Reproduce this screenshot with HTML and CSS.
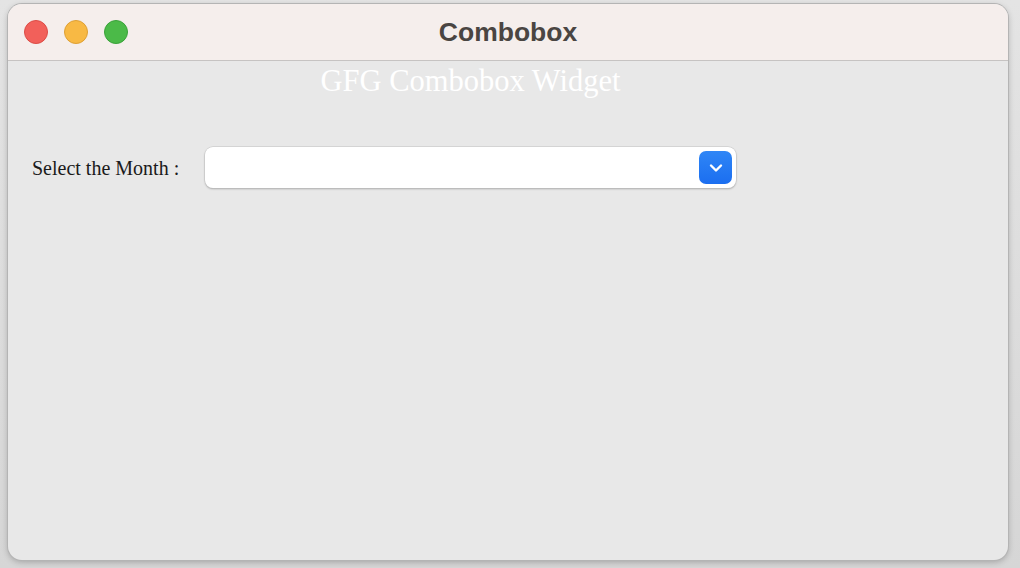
FILE: index.html
```html
<!DOCTYPE html>
<html>
<head>
<meta charset="utf-8">
<link rel="stylesheet" href="styles.css">
</head>
<body>
<div class="window">
  <div class="titlebar">
    <div class="lights">
      <span class="light red"></span>
      <span class="light yellow"></span>
      <span class="light green"></span>
    </div>
    <div class="title">Combobox</div>
  </div>
  <div class="content">
    <div class="heading">GFG Combobox Widget</div>
    <div class="row">
      <div class="label">Select the Month :</div>
      <div class="combo">
        <div class="arrow">
          <svg width="14" height="10" viewBox="0 0 14 10"><path d="M2 2.5 L7 7.5 L12 2.5" fill="none" stroke="#fff" stroke-width="2.4" stroke-linecap="round" stroke-linejoin="round"/></svg>
        </div>
      </div>
    </div>
  </div>
</div>
</body>
</html>
```
FILE: styles.css
```css
html, body {
  margin: 0;
  padding: 0;
}
body {
  width: 1020px;
  height: 568px;
  background: linear-gradient(180deg, #e4e4e4 0%, #d6d6d6 100%);
  overflow: hidden;
  padding-top: 4px;
  padding-left: 8px;
  box-sizing: border-box;
}
.window {
  width: 1000px;
  height: 556px;
  border-radius: 14px;
  background: #e8e8e8;
  box-shadow: 0 0 0 1px #b4b4b4, 0 2px 6px rgba(0,0,0,0.25);
  overflow: hidden;
  display: flex;
  flex-direction: column;
}
.titlebar {
  height: 56px;
  background: #f5eeec;
  border-bottom: 1px solid #c6c3c2;
  display: flex;
  align-items: center;
  position: relative;
  flex-shrink: 0;
}
.lights {
  display: flex;
  gap: 16px;
  padding-left: 16px;
}
.light {
  width: 22px;
  height: 22px;
  border-radius: 50%;
  display: block;
}
.red { background: #f2605a; border: 1px solid #dc4c46; }
.yellow { background: #f8b944; border: 1px solid #dea035; }
.green { background: #4bba48; border: 1px solid #3aa23a; }
.title {
  position: absolute;
  left: 0;
  right: 0;
  top: 0;
  bottom: 0;
  display: flex;
  align-items: center;
  justify-content: center;
  font-family: "Liberation Sans", Arial, sans-serif;
  font-weight: bold;
  font-size: 26.5px;
  color: #4a4542;
  pointer-events: none;
}
.content {
  flex: 1;
  font-family: "Liberation Serif", "Times New Roman", serif;
}
.heading {
  width: 925px;
  text-align: center;
  color: #ffffff;
  font-size: 30.5px;
  line-height: 32px;
  margin-top: 4px;
}
.row {
  display: flex;
  align-items: center;
  margin-top: 50px;
  padding-left: 24px;
}
.label {
  font-size: 20px;
  color: #1a1a1a;
  width: 173px;
  padding-top: 1px;
}
.combo {
  width: 531px;
  height: 41px;
  background: #fff;
  border-radius: 8px;
  box-shadow: 0 0 0 0.5px #c4c4c4, 0 1px 2px rgba(0,0,0,0.3);
  display: flex;
  align-items: center;
  justify-content: flex-end;
  padding-right: 4px;
  box-sizing: border-box;
}
.arrow {
  width: 33px;
  height: 33px;
  border-radius: 7px;
  background: linear-gradient(180deg, #2f86f6 0%, #1b6ef0 100%);
  display: flex;
  align-items: center;
  justify-content: center;
}
```
